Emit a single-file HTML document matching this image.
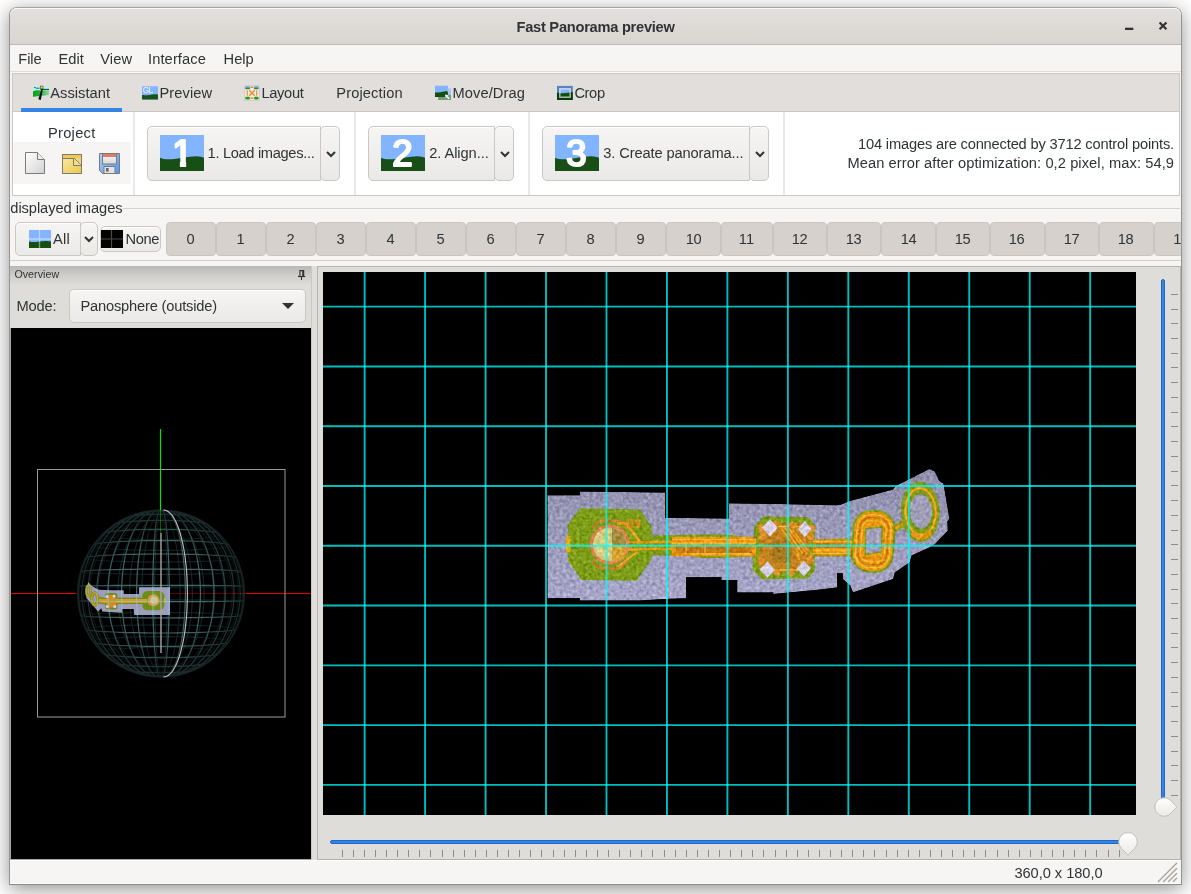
<!DOCTYPE html>
<html><head><meta charset="utf-8"><title>Fast Panorama preview</title><style>
html,body{margin:0;padding:0;}
body{width:1191px;height:894px;overflow:hidden;background:#fff;position:relative;font-family:'Liberation Sans', sans-serif;}
#win{position:absolute;left:9px;top:7px;width:1173px;height:878px;box-sizing:border-box;border:1px solid #949494;border-top-color:#a3a3a3;border-bottom-color:#8c8c8c;border-radius:8px 8px 0 0;background:#f6f5f4;box-shadow:0 4px 20px 0 rgba(0,0,0,.44);}
.t{position:absolute;white-space:pre;line-height:1;}
#tx{position:absolute;left:0;top:0;width:1191px;height:894px;}
#all{position:absolute;left:0;top:0;width:1191px;height:894px;will-change:transform;}
</style></head><body>
<div id="all">
<div id="win"></div>
<div style="position:absolute;left:10px;top:8px;width:1171px;height:36px;background:linear-gradient(#e2dfdc,#d9d5d1);border-radius:7px 7px 0 0;box-shadow:inset 0 1px rgba(255,255,255,.8);"></div>
<div style="position:absolute;left:10px;top:44px;width:1171px;height:1px;background:#bfb8b1;"></div>
<svg style="position:absolute;left:1120px;top:16px" width="56" height="20"><rect x="5" y="11.7" width="8.3" height="2.3" fill="#2e3436"/><path d="M39.600 6.450 L46.400 13.250 M46.400 6.450 L39.600 13.250" stroke="#2e3436" stroke-width="2.200"/></svg>
<div style="position:absolute;left:10px;top:45px;width:1171px;height:27px;background:#f6f5f4;"></div>
<div style="position:absolute;left:10px;top:71px;width:1171px;height:1px;background:#dededc;"></div>
<div style="position:absolute;left:10px;top:72px;width:1171px;height:1px;background:#fbfbfa;"></div>
<div style="position:absolute;left:12px;top:73px;width:1168px;height:123px;background:#fff;border:1px solid #cdc7c2;box-sizing:border-box;"></div>
<div style="position:absolute;left:13px;top:74px;width:1166px;height:37px;background:#e1dedb;"></div>
<div style="position:absolute;left:13px;top:111px;width:1166px;height:1px;background:#cdc7c2;"></div>
<div style="position:absolute;left:21px;top:108px;width:101px;height:4px;background:#3584e4;"></div>
<div style="position:absolute;left:13px;top:142px;width:118px;height:42px;background:#f6f5f4;"></div>
<div style="position:absolute;left:133px;top:112px;width:2px;height:83px;background:#e9e9e8;"></div>
<div style="position:absolute;left:354px;top:112px;width:2px;height:83px;background:#e9e9e8;"></div>
<div style="position:absolute;left:528px;top:112px;width:2px;height:83px;background:#e9e9e8;"></div>
<div style="position:absolute;left:783px;top:112px;width:2px;height:83px;background:#e9e9e8;"></div>
<div style="position:absolute;left:147px;top:126px;width:174px;height:55px;box-sizing:border-box;border:1px solid #cdc7c2;border-radius:5px 0 0 5px;background:linear-gradient(#f6f5f4,#ebe9e7);box-shadow:inset 0 1px #fff;"></div><div style="position:absolute;left:320px;top:126px;width:20px;height:55px;box-sizing:border-box;border:1px solid #cdc7c2;border-radius:5px;background:linear-gradient(#f6f5f4,#ebe9e7);box-shadow:inset 0 1px #fff;"></div><svg style="position:absolute;left:324.5px;top:148px" width="12" height="12"><path d="M2 4 L6 8 L10 4" fill="none" stroke="#2e3436" stroke-width="2"/></svg>
<svg style="position:absolute;left:160px;top:135px" width="44" height="36" viewBox="0 0 44 36"><clipPath id="c1"><path d="M0 0H44V26.900H26.100V36H19.900V26.900H0Z"/></clipPath><rect width="44" height="36" fill="#82b4ff"/><path d="M0 22.800 C3 24.200 7 24.600 12 24.200 C20 23.500 28 21.300 36 21.200 C40 21.200 42 22 44 22.700 L44 36 L0 36Z" fill="#174f17"/><g clip-path="url(#c1)"><text x="22.4" y="31.100" text-anchor="middle" font-family="Liberation Sans, sans-serif" font-size="36.600" fill="#fff" stroke="#fff" stroke-width="2.200" stroke-linejoin="round">1</text></g></svg>
<div style="position:absolute;left:368px;top:126px;width:127px;height:55px;box-sizing:border-box;border:1px solid #cdc7c2;border-radius:5px 0 0 5px;background:linear-gradient(#f6f5f4,#ebe9e7);box-shadow:inset 0 1px #fff;"></div><div style="position:absolute;left:494px;top:126px;width:20px;height:55px;box-sizing:border-box;border:1px solid #cdc7c2;border-radius:5px;background:linear-gradient(#f6f5f4,#ebe9e7);box-shadow:inset 0 1px #fff;"></div><svg style="position:absolute;left:498.5px;top:148px" width="12" height="12"><path d="M2 4 L6 8 L10 4" fill="none" stroke="#2e3436" stroke-width="2"/></svg>
<svg style="position:absolute;left:381px;top:135px" width="44" height="36" viewBox="0 0 44 36"><rect width="44" height="36" fill="#82b4ff"/><path d="M0 22.800 C3 24.200 7 24.600 12 24.200 C20 23.500 28 21.300 36 21.200 C40 21.200 42 22 44 22.700 L44 36 L0 36Z" fill="#174f17"/><g><text x="21.3" y="31.100" text-anchor="middle" font-family="Liberation Sans, sans-serif" font-size="36.600" fill="#fff" stroke="#fff" stroke-width="2.200" stroke-linejoin="round">2</text></g></svg>
<div style="position:absolute;left:542px;top:126px;width:208px;height:55px;box-sizing:border-box;border:1px solid #cdc7c2;border-radius:5px 0 0 5px;background:linear-gradient(#f6f5f4,#ebe9e7);box-shadow:inset 0 1px #fff;"></div><div style="position:absolute;left:749px;top:126px;width:20px;height:55px;box-sizing:border-box;border:1px solid #cdc7c2;border-radius:5px;background:linear-gradient(#f6f5f4,#ebe9e7);box-shadow:inset 0 1px #fff;"></div><svg style="position:absolute;left:753.5px;top:148px" width="12" height="12"><path d="M2 4 L6 8 L10 4" fill="none" stroke="#2e3436" stroke-width="2"/></svg>
<svg style="position:absolute;left:555px;top:135px" width="44" height="36" viewBox="0 0 44 36"><rect width="44" height="36" fill="#82b4ff"/><path d="M0 22.800 C3 24.200 7 24.600 12 24.200 C20 23.500 28 21.300 36 21.200 C40 21.200 42 22 44 22.700 L44 36 L0 36Z" fill="#174f17"/><g><text x="21.3" y="31.100" text-anchor="middle" font-family="Liberation Sans, sans-serif" font-size="36.600" fill="#fff" stroke="#fff" stroke-width="2.200" stroke-linejoin="round">3</text></g></svg>
<div style="position:absolute;left:123px;top:208px;width:1057px;height:1px;background:#d5d0cc;"></div>
<div style="position:absolute;left:10px;top:260px;width:1171px;height:1px;background:#d5d0cc;"></div>
<div style="position:absolute;left:15px;top:222px;width:66px;height:34px;box-sizing:border-box;border:1px solid #cdc7c2;border-radius:5px 0 0 5px;background:linear-gradient(#f6f5f4,#ebe9e7);box-shadow:inset 0 1px #fff;"></div>
<div style="position:absolute;left:80px;top:222px;width:18px;height:34px;box-sizing:border-box;border:1px solid #cdc7c2;border-radius:5px;background:linear-gradient(#f6f5f4,#ebe9e7);box-shadow:inset 0 1px #fff;"></div>
<svg style="position:absolute;left:83px;top:233px" width="12" height="12"><path d="M2 4 L6 8 L10 4" fill="none" stroke="#2e3436" stroke-width="2"/></svg>
<svg style="position:absolute;left:29px;top:230px" width="22" height="18"><rect width="22" height="18" fill="#82b4ff"/><path d="M0 11.5 C5 13 11 11 16 11 C19 11 20.5 11.2 22 11.5 L22 18 L0 18Z" fill="#174f12"/><path d="M10.5 0V18M0 9H22" stroke="rgba(255,255,255,.45)" stroke-width="1.4"/></svg>
<div style="position:absolute;left:100px;top:226px;width:61px;height:26px;box-sizing:border-box;border:1px solid #cdc7c2;border-radius:5px;background:linear-gradient(#f6f5f4,#ebe9e7);box-shadow:inset 0 1px #fff;"></div>
<svg style="position:absolute;left:101px;top:230px" width="22" height="18"><rect width="22" height="18" fill="#000"/><path d="M10.5 0V18M0 9H22" stroke="#4a4a4a" stroke-width="1.2"/></svg>
<div style="position:absolute;left:166px;top:222px;width:1015px;height:34px;overflow:hidden;"><div style="position:absolute;left:0px;top:0px;width:50px;height:34px;box-sizing:border-box;border:1px solid #cbc5c0;border-radius:4px;background:#d6d1cd;"></div><div style="position:absolute;left:50px;top:0px;width:50px;height:34px;box-sizing:border-box;border:1px solid #cbc5c0;border-radius:4px;background:#d6d1cd;"></div><div style="position:absolute;left:100px;top:0px;width:50px;height:34px;box-sizing:border-box;border:1px solid #cbc5c0;border-radius:4px;background:#d6d1cd;"></div><div style="position:absolute;left:150px;top:0px;width:50px;height:34px;box-sizing:border-box;border:1px solid #cbc5c0;border-radius:4px;background:#d6d1cd;"></div><div style="position:absolute;left:200px;top:0px;width:50px;height:34px;box-sizing:border-box;border:1px solid #cbc5c0;border-radius:4px;background:#d6d1cd;"></div><div style="position:absolute;left:250px;top:0px;width:50px;height:34px;box-sizing:border-box;border:1px solid #cbc5c0;border-radius:4px;background:#d6d1cd;"></div><div style="position:absolute;left:300px;top:0px;width:50px;height:34px;box-sizing:border-box;border:1px solid #cbc5c0;border-radius:4px;background:#d6d1cd;"></div><div style="position:absolute;left:350px;top:0px;width:50px;height:34px;box-sizing:border-box;border:1px solid #cbc5c0;border-radius:4px;background:#d6d1cd;"></div><div style="position:absolute;left:400px;top:0px;width:50px;height:34px;box-sizing:border-box;border:1px solid #cbc5c0;border-radius:4px;background:#d6d1cd;"></div><div style="position:absolute;left:450px;top:0px;width:50px;height:34px;box-sizing:border-box;border:1px solid #cbc5c0;border-radius:4px;background:#d6d1cd;"></div><div style="position:absolute;left:500px;top:0px;width:55px;height:34px;box-sizing:border-box;border:1px solid #cbc5c0;border-radius:4px;background:#d6d1cd;"></div><div style="position:absolute;left:555px;top:0px;width:52px;height:34px;box-sizing:border-box;border:1px solid #cbc5c0;border-radius:4px;background:#d6d1cd;"></div><div style="position:absolute;left:607px;top:0px;width:54px;height:34px;box-sizing:border-box;border:1px solid #cbc5c0;border-radius:4px;background:#d6d1cd;"></div><div style="position:absolute;left:661px;top:0px;width:54px;height:34px;box-sizing:border-box;border:1px solid #cbc5c0;border-radius:4px;background:#d6d1cd;"></div><div style="position:absolute;left:715px;top:0px;width:55px;height:34px;box-sizing:border-box;border:1px solid #cbc5c0;border-radius:4px;background:#d6d1cd;"></div><div style="position:absolute;left:770px;top:0px;width:54px;height:34px;box-sizing:border-box;border:1px solid #cbc5c0;border-radius:4px;background:#d6d1cd;"></div><div style="position:absolute;left:824px;top:0px;width:55px;height:34px;box-sizing:border-box;border:1px solid #cbc5c0;border-radius:4px;background:#d6d1cd;"></div><div style="position:absolute;left:879px;top:0px;width:54px;height:34px;box-sizing:border-box;border:1px solid #cbc5c0;border-radius:4px;background:#d6d1cd;"></div><div style="position:absolute;left:933px;top:0px;width:55px;height:34px;box-sizing:border-box;border:1px solid #cbc5c0;border-radius:4px;background:#d6d1cd;"></div><div style="position:absolute;left:988px;top:0px;width:55px;height:34px;box-sizing:border-box;border:1px solid #cbc5c0;border-radius:4px;background:#d6d1cd;"></div></div>
<div style="position:absolute;left:10px;top:266px;width:302px;height:18px;background:linear-gradient(#b9b8b6,#cfcecb 55%,#dddbd8);"></div>
<div style="position:absolute;left:10px;top:284px;width:302px;height:44px;background:#deddda;"></div>
<div style="position:absolute;left:69px;top:289px;width:237px;height:34px;box-sizing:border-box;border:1px solid #cdc7c2;border-radius:5px;background:linear-gradient(#f6f5f4,#ebe9e7);box-shadow:inset 0 1px #fff;"></div>
<svg style="position:absolute;left:281px;top:302px" width="14" height="8"><path d="M1 1 L13 1 L7 7Z" fill="#2e3436"/></svg>
<svg style="position:absolute;left:297px;top:269px" width="10" height="12" viewBox="297 269 10 12"><path d="M299.900 276V270.600H303.200V276" stroke="#2e3436" stroke-width="1.100" fill="none"/><path d="M303.300 270.100V276" stroke="#2e3436" stroke-width="1.900" fill="none"/><path d="M298 276.500H305.200" stroke="#2e3436" stroke-width="1.200"/><path d="M301.500 277V280" stroke="#2e3436" stroke-width="1.100"/></svg>
<div style="position:absolute;left:10px;top:328px;width:302px;height:532px;background:#a8a7a5;"></div>
<div style="position:absolute;left:11px;top:328px;width:300px;height:531px;background:#000;"></div>
<div style="position:absolute;left:311px;top:266px;width:1px;height:594px;background:#c9c8c5;"></div>
<div style="position:absolute;left:312px;top:266px;width:5px;height:594px;background:#e0dedb;"></div>
<div style="position:absolute;left:317px;top:266px;width:864px;height:594px;background:#deddda;border:1px solid #b6b3ae;box-sizing:border-box;"></div>
<div style="position:absolute;left:323px;top:272px;width:813px;height:543px;background:#000;"></div>
<div style="position:absolute;left:10px;top:860px;width:1171px;height:24px;background:#f6f5f4;box-shadow:inset 0 1px #fcfcfb, inset 0 -1px #fdfdfc;"></div>
<svg style="position:absolute;left:323px;top:272px" width="813" height="543" viewBox="323 272 813 543">
<defs><filter id="nz" filterUnits="userSpaceOnUse" x="540" y="460" width="420" height="150" color-interpolation-filters="sRGB"><feTurbulence type="fractalNoise" baseFrequency="0.3" numOctaves="2" seed="7" result="n"/><feColorMatrix in="n" type="matrix" values="0.5 0.5 0 0 0  0.5 0.5 0 0 0  0.5 0.5 0 0 0  0 0 0 0 1" result="g"/><feComposite in="SourceGraphic" in2="g" operator="arithmetic" k1="0" k2="1" k3="0.5" k4="-0.25" result="c"/><feComposite in="c" in2="SourceAlpha" operator="in"/></filter><linearGradient id="gg" gradientUnits="userSpaceOnUse" x1="0" y1="470" x2="0" y2="600"><stop offset="0" stop-color="#8f8eab"/><stop offset="1" stop-color="#a7a6c8"/></linearGradient><clipPath id="cp"><rect x="323" y="272" width="813" height="543"/></clipPath></defs>
<g clip-path="url(#cp)"><g filter="url(#nz)">
<polygon points="547.4,495.2 580.0,495.2 580.0,491.5 665.1,492.5 665.1,517.8 726.3,518.6 728.8,518.6 728.8,503.2 780.0,504.0 836.0,505.2 841.2,504.5 849.5,501.1 893.1,489.4 895.7,486.0 929.3,469.0 934.8,471.5 939.3,481.1 943.5,483.5 949.4,518.8 947.4,521.4 947.9,530.4 935.1,543.9 929.3,547.5 911.6,555.6 909.9,562.3 894.8,572.4 893.1,579.1 852.9,592.5 850.4,585.8 842.8,579.1 842.8,573.2 837.0,573.2 837.0,587.5 816.0,590.0 773.3,594.0 773.3,592.4 737.2,592.4 737.2,579.9 721.3,579.9 721.3,577.3 692.0,577.3 686.0,577.3 686.0,598.3 665.0,599.0 640.0,600.5 580.0,600.5 580.0,598.3 547.4,598.3" fill="url(#gg)"/>
<polygon points="580.4,508.2 640.0,509.5 651.7,527.0 651.7,535.4 676.0,535.0 700.0,534.6 726.0,534.6 754.0,537.8 754.0,526.9 763.1,516.4 808.0,517.0 814.9,525.0 814.9,539.5 852.0,538.0 852.0,556.5 814.9,556.4 814.9,570.6 807.8,578.5 762.6,579.2 752.6,570.6 752.6,556.4 726.0,558.0 700.0,558.0 690.0,555.5 651.7,555.5 651.7,558.9 636.6,580.7 581.3,579.9 567.9,560.6 567.9,523.7" fill="#7d9c18"/>
<rect x="566" y="536.2" width="4.4" height="16" fill="#e0b010"/>
<path d="M630 542.200H680M630 548.800H680" stroke="#e8960f" stroke-width="2.200" fill="none"/>
<rect x="672" y="536.800" width="84" height="19.500" fill="#e8960f"/>
<rect x="813" y="539.500" width="40" height="16" fill="#e8960f"/>
<rect x="676" y="545" width="76" height="8" fill="#c47a14"/>
<rect x="816" y="543" width="34" height="5" fill="#c47a14"/>
<path d="M672 539.500H756M672 543.200H756M690 553.800H752M813 541.500H853M813 550H853M813 553.500H853" stroke="#f7b93a" stroke-width="1.200" fill="none"/>
<path d="M686 541V554M705 541V554" stroke="#f7b93a" stroke-width="1.200" fill="none"/>
<path d="M592 528 L600 520.500 L619 520.500 L628 528 M592 561 L600 568.500 L619 568.500 L628 561" stroke="#d07a32" stroke-width="2.200" fill="none"/>
<circle cx="609.8" cy="544.6" r="20" fill="#dd8450"/>
<circle cx="609.8" cy="544.6" r="16.800" fill="#d3cd82"/>
<path d="M612 528 A16.800 16.800 0 0 1 612 561.200Z" fill="#a08c3c"/>
<path d="M612 545 H626 V556 A16.800 16.800 0 0 1 612 561.200Z" fill="#d6a232"/>
<path d="M617 523.500 L626 523.500 L640 541.500" stroke="#f2a11c" stroke-width="2.400" fill="none"/>
<path d="M628 550 L641 549.500 M617 567 L637 552" stroke="#f2a11c" stroke-width="2" fill="none"/>
<text x="627" y="528.300" font-family="Liberation Sans, sans-serif" font-size="12.500" font-weight="700" fill="#e8861a">09</text>
<polygon points="765.0,523.0 806.0,523.0 811.0,528.0 811.0,567.0 806.0,572.0 765.0,572.0 759.0,567.0 759.0,528.0" fill="#c2821e"/>
<rect x="772" y="540" width="20" height="22" fill="#a9791f"/>
<path d="M778 526.500H800M776 570H798" stroke="#f7b93a" stroke-width="1.600" fill="none"/>
<path d="M781 528L799 554M785 528L803 554M789 528L807 554M793 530L808 551" stroke="#f2a11c" stroke-width="1.500" fill="none"/>
<path d="M797 554L803 566" stroke="#f2a11c" stroke-width="2" fill="none"/>
<circle cx="762.6" cy="535.9" r="3.600" fill="#e0902a"/>
<circle cx="761.6" cy="527.4" r="3.600" fill="#e0902a"/>
<circle cx="810.6" cy="536.4" r="3.600" fill="#e0902a"/>
<circle cx="811.6" cy="528.3" r="3.600" fill="#e0902a"/>
<circle cx="760.7" cy="560.6" r="3.600" fill="#e0902a"/>
<circle cx="810.2" cy="559.7" r="3.600" fill="#e0902a"/>
<circle cx="792.6" cy="525" r="3.600" fill="#e0902a"/>
<circle cx="775" cy="524" r="3.600" fill="#e0902a"/>
<circle cx="790" cy="573" r="3.600" fill="#e0902a"/>
<circle cx="777" cy="572" r="3.600" fill="#e0902a"/>
<polygon points="762.0,527.8 769.9,519.2 777.8,527.8 769.9,536.4" fill="#d5d0e6"/>
<polygon points="798.1,529 804.7,520.7 811.3,529 804.7,537.3" fill="#d5d0e6"/>
<polygon points="759.6,569.7 767.4,561.6 775.2,569.7 767.4,577.8" fill="#d5d0e6"/>
<polygon points="796.8,568.5 803.8,560.6 810.8,568.5 803.8,576.4" fill="#d5d0e6"/>
<path d="M893 530 L908 520.500" stroke="#7d9c18" stroke-width="7"/><path d="M893 530 L908 520.500" stroke="#e8960f" stroke-width="3.200"/>
<g transform="translate(873.2 541.3) rotate(4)"><rect x="-21.500" y="-31.500" width="43" height="63" rx="19" fill="#7d9c18"/><rect x="-19.500" y="-29.500" width="39" height="59" rx="17" fill="#e8960f"/><rect x="-17" y="-26.500" width="34" height="53" rx="14" fill="none" stroke="#f7b93a" stroke-width="1.300"/><rect x="-14.500" y="-23.500" width="29" height="47" rx="11" fill="none" stroke="#c97c14" stroke-width="1.600"/><rect x="-12" y="-20.500" width="24" height="41" rx="8" fill="none" stroke="#f7b93a" stroke-width="1.200"/><polygon points="-8.500,-12 8,-15 9,10 -7,14" fill="#a19eba" stroke="#7d9c18" stroke-width="1.400" stroke-linejoin="round"/></g>
<g transform="translate(920.3 511.7) rotate(-3)"><ellipse rx="19.400" ry="30.200" fill="#7d9c18"/><ellipse cx="0.600" cy="-0.300" rx="11" ry="17.100" fill="#a19eba"/><ellipse cx="0.300" rx="15" ry="23.500" fill="none" stroke="#e8960f" stroke-width="2.800"/><ellipse cx="0.300" rx="15" ry="23.500" fill="none" stroke="#f7b93a" stroke-width="0.900"/><path d="M-9 21 A15 23.500 0 0 0 9 21" stroke="#e8960f" stroke-width="4.500" fill="none"/></g>
</g></g>
<path d="M323 306.65H1136M323 366.43H1136M323 426.21H1136M323 485.99H1136M323 545.77H1136M323 605.55H1136M323 665.33H1136M323 725.11H1136M323 784.89H1136" stroke="#0ff" stroke-opacity="0.740" stroke-width="1.900" fill="none"/>
<path d="M364.65 272V815M425.11 272V815M485.57 272V815M546.03 272V815M606.49 272V815M666.95 272V815M727.41 272V815M787.87 272V815M848.33 272V815M908.79 272V815M969.25 272V815M1029.71 272V815M1090.17 272V815" stroke="#0ff" stroke-opacity="0.740" stroke-width="1.900" fill="none"/>
</svg>
<svg style="position:absolute;left:11px;top:328px" width="300" height="531" viewBox="11 328 300 531">
<path d="M160.5 429V510" stroke="#00e800" stroke-width="1.2"/>
<path d="M160.5 510V533" stroke="#006000" stroke-width="1"/>
<path d="M11 593.5H76.5M246 593.5H311" stroke="#e80000" stroke-width="1.2"/>
<path d="M170 593.5H246" stroke="#5a0000" stroke-width="1"/>
<rect x="37.5" y="469.5" width="247.500" height="247.500" fill="none" stroke="#9a9a9a" stroke-width="1"/>
<g>
<polygon points="170,587.200 139,587.200 139,593.900 123.700,593.900 123.700,590.200 111.900,590.200 98.900,589.700 91.800,586 88.400,582.200 85.500,589.300 86.300,597.700 98,611.600 101.400,608.200 102.200,611.600 122,612.800 122,609 133.700,609 134.200,614.900 170,614.900" fill="#9e9cbc"/>
<rect x="142.100" y="591" width="22.300" height="19.300" rx="5.500" fill="#6f8c14"/>
<rect x="105.200" y="593.100" width="12.200" height="16.400" rx="2.500" fill="#6f8c14"/>
<path d="M96 599.500 L104 601 L146 600.800" stroke="#758c18" stroke-width="6.500" fill="none"/>
<path d="M97 599.800 L104 601 L147 600.800" stroke="#dc9620" stroke-width="3.800" fill="none"/>
<rect x="106.500" y="595" width="9.600" height="12.600" rx="2" fill="#cf8c22"/>
<circle cx="106.9" cy="596.4" r="1.500" fill="#d8d4ea"/>
<circle cx="114" cy="596" r="1.500" fill="#d8d4ea"/>
<circle cx="107.3" cy="606.5" r="1.500" fill="#d8d4ea"/>
<circle cx="114.8" cy="606.5" r="1.500" fill="#d8d4ea"/>
<ellipse cx="94.700" cy="599" rx="3" ry="6.200" fill="none" stroke="#6f8c14" stroke-width="3"/>
<ellipse cx="94.700" cy="599" rx="3" ry="6.200" fill="none" stroke="#d89a28" stroke-width="1.500"/>
<ellipse cx="88.300" cy="591" rx="2" ry="5.300" fill="none" stroke="#6f8c14" stroke-width="2.600"/>
<ellipse cx="88.300" cy="591" rx="2" ry="5.300" fill="none" stroke="#d89a28" stroke-width="1.200"/>
<circle cx="153.500" cy="600.300" r="6" fill="#d89a4c"/>
<circle cx="154" cy="600.200" r="3.600" fill="#dcc88c"/>
<rect x="164" y="598" width="1.500" height="4.500" fill="#e0b010"/>
</g>
<defs><radialGradient id="sg" gradientUnits="userSpaceOnUse" cx="161" cy="593.5" r="84"><stop offset="0" stop-color="#fff"/><stop offset="0.6" stop-color="#fff" stop-opacity="0.85"/><stop offset="1" stop-color="#fff" stop-opacity="0.3"/></radialGradient><mask id="sm" maskUnits="userSpaceOnUse" x="70" y="500" width="182" height="187"><rect x="70" y="500" width="182" height="187" fill="url(#sg)"/></mask></defs>
<g mask="url(#sm)"><path d="M161.0 676.3 L169.6 675.8 L178.1 674.4 L186.4 672.0 L194.4 668.8 L202.0 664.9 L209.2 660.1 L215.8 654.6 L221.8 648.5 L227.2 641.8 L231.8 634.5 L235.7 626.9 L238.7 618.8 L240.9 610.5 L242.2 602.1 L242.6 593.5 L242.2 584.9 L240.9 576.5 L238.7 568.2 L235.7 560.1 L231.8 552.5 L227.2 545.2 L221.8 538.5 L215.8 532.4 L209.2 526.9 L202.0 522.1 L194.4 518.2 L186.4 515.0 L178.1 512.6 L169.6 511.2 L161.0 510.7M161.0 676.3 L169.3 675.6 L177.5 674.0 L185.5 671.5 L193.1 668.2 L200.4 664.1 L207.2 659.3 L213.4 653.8 L219.1 647.6 L224.1 641.0 L228.4 633.8 L232.0 626.2 L234.8 618.3 L236.9 610.2 L238.1 601.9 L238.5 593.5 L238.1 585.1 L236.9 576.8 L234.8 568.7 L232.0 560.8 L228.4 553.2 L224.1 546.0 L219.1 539.4 L213.4 533.2 L207.2 527.7 L200.4 522.9 L193.1 518.8 L185.5 515.5 L177.5 513.0 L169.3 511.4 L161.0 510.7M161.0 676.3 L168.8 675.4 L176.4 673.7 L183.8 671.0 L190.9 667.6 L197.6 663.4 L203.8 658.5 L209.5 653.0 L214.7 646.8 L219.3 640.2 L223.2 633.1 L226.4 625.6 L229.0 617.9 L230.8 609.9 L231.9 601.7 L232.3 593.5 L231.9 585.3 L230.8 577.1 L229.0 569.1 L226.4 561.4 L223.2 553.9 L219.3 546.8 L214.7 540.2 L209.5 534.0 L203.8 528.5 L197.6 523.6 L190.9 519.4 L183.8 516.0 L176.4 513.3 L168.8 511.6 L161.0 510.7M161.0 676.3 L168.0 675.3 L174.9 673.3 L181.5 670.6 L187.8 667.0 L193.8 662.8 L199.3 657.8 L204.3 652.2 L208.9 646.1 L212.9 639.5 L216.3 632.5 L219.2 625.1 L221.4 617.5 L223.0 609.6 L224.0 601.6 L224.3 593.5 L224.0 585.4 L223.0 577.4 L221.4 569.5 L219.2 561.9 L216.3 554.5 L212.9 547.5 L208.9 540.9 L204.3 534.8 L199.3 529.2 L193.8 524.2 L187.8 520.0 L181.5 516.4 L174.9 513.7 L168.0 511.7 L161.0 510.7M161.0 676.3 L167.1 675.1 L173.0 673.1 L178.6 670.2 L184.0 666.6 L189.1 662.2 L193.7 657.2 L198.0 651.6 L201.9 645.5 L205.2 638.9 L208.1 632.0 L210.5 624.7 L212.4 617.1 L213.7 609.4 L214.6 601.5 L214.8 593.5 L214.6 585.5 L213.7 577.6 L212.4 569.9 L210.5 562.3 L208.1 555.0 L205.2 548.1 L201.9 541.5 L198.0 535.4 L193.7 529.8 L189.1 524.8 L184.0 520.4 L178.6 516.8 L173.0 513.9 L167.1 511.9 L161.0 510.7M161.0 676.3 L165.9 675.0 L170.7 672.8 L175.2 669.9 L179.6 666.2 L183.6 661.8 L187.3 656.7 L190.8 651.1 L193.8 645.0 L196.5 638.5 L198.8 631.5 L200.7 624.3 L202.2 616.8 L203.2 609.2 L203.9 601.4 L204.1 593.5 L203.9 585.6 L203.2 577.8 L202.2 570.2 L200.7 562.7 L198.8 555.5 L196.5 548.5 L193.8 542.0 L190.8 535.9 L187.3 530.3 L183.6 525.2 L179.6 520.8 L175.2 517.1 L170.7 514.2 L165.9 512.0 L161.0 510.7M161.0 676.3 L164.6 674.9 L168.1 672.7 L171.5 669.6 L174.6 665.8 L177.6 661.4 L180.3 656.3 L182.8 650.7 L185.0 644.6 L186.9 638.1 L188.6 631.2 L190.0 624.0 L191.1 616.6 L191.8 609.0 L192.3 601.3 L192.4 593.5 L192.3 585.7 L191.8 578.0 L191.1 570.4 L190.0 563.0 L188.6 555.8 L186.9 548.9 L185.0 542.4 L182.8 536.3 L180.3 530.7 L177.6 525.6 L174.6 521.2 L171.5 517.4 L168.1 514.3 L164.6 512.1 L161.0 510.7M161.0 676.3 L163.2 674.9 L165.3 672.6 L167.4 669.5 L169.3 665.6 L171.1 661.2 L172.8 656.1 L174.3 650.5 L175.6 644.4 L176.8 637.9 L177.8 631.0 L178.6 623.8 L179.3 616.5 L179.8 608.9 L180.0 601.2 L180.1 593.5 L180.0 585.8 L179.8 578.1 L179.3 570.5 L178.6 563.2 L177.8 556.0 L176.8 549.1 L175.6 542.6 L174.3 536.5 L172.8 530.9 L171.1 525.8 L169.3 521.4 L167.4 517.5 L165.3 514.4 L163.2 512.1 L161.0 510.7M161.0 676.3 L161.7 674.8 L162.5 672.5 L163.1 669.4 L163.8 665.5 L164.4 661.0 L165.0 656.0 L165.5 650.3 L165.9 644.2 L166.3 637.7 L166.6 630.9 L166.9 623.8 L167.1 616.4 L167.3 608.9 L167.4 601.2 L167.4 593.5 L167.4 585.8 L167.3 578.1 L167.1 570.6 L166.9 563.2 L166.6 556.1 L166.3 549.3 L165.9 542.8 L165.5 536.7 L165.0 531.0 L164.4 526.0 L163.8 521.5 L163.1 517.6 L162.5 514.5 L161.7 512.2 L161.0 510.7M161.0 676.3 L160.3 674.8 L159.5 672.5 L158.9 669.4 L158.2 665.5 L157.6 661.0 L157.0 656.0 L156.5 650.3 L156.1 644.2 L155.7 637.7 L155.4 630.9 L155.1 623.8 L154.9 616.4 L154.7 608.9 L154.6 601.2 L154.6 593.5 L154.6 585.8 L154.7 578.1 L154.9 570.6 L155.1 563.2 L155.4 556.1 L155.7 549.3 L156.1 542.8 L156.5 536.7 L157.0 531.0 L157.6 526.0 L158.2 521.5 L158.9 517.6 L159.5 514.5 L160.3 512.2 L161.0 510.7M161.0 676.3 L158.8 674.9 L156.7 672.6 L154.6 669.5 L152.7 665.6 L150.9 661.2 L149.2 656.1 L147.7 650.5 L146.4 644.4 L145.2 637.9 L144.2 631.0 L143.4 623.8 L142.7 616.5 L142.2 608.9 L142.0 601.2 L141.9 593.5 L142.0 585.8 L142.2 578.1 L142.7 570.5 L143.4 563.2 L144.2 556.0 L145.2 549.1 L146.4 542.6 L147.7 536.5 L149.2 530.9 L150.9 525.8 L152.7 521.4 L154.6 517.5 L156.7 514.4 L158.8 512.1 L161.0 510.7M161.0 676.3 L157.4 674.9 L153.9 672.7 L150.5 669.6 L147.4 665.8 L144.4 661.4 L141.7 656.3 L139.2 650.7 L137.0 644.6 L135.1 638.1 L133.4 631.2 L132.0 624.0 L130.9 616.6 L130.2 609.0 L129.7 601.3 L129.6 593.5 L129.7 585.7 L130.2 578.0 L130.9 570.4 L132.0 563.0 L133.4 555.8 L135.1 548.9 L137.0 542.4 L139.2 536.3 L141.7 530.7 L144.4 525.6 L147.4 521.2 L150.5 517.4 L153.9 514.3 L157.4 512.1 L161.0 510.7M161.0 676.3 L156.1 675.0 L151.3 672.8 L146.8 669.9 L142.4 666.2 L138.4 661.8 L134.7 656.7 L131.2 651.1 L128.2 645.0 L125.5 638.5 L123.2 631.5 L121.3 624.3 L119.8 616.8 L118.8 609.2 L118.1 601.4 L117.9 593.5 L118.1 585.6 L118.8 577.8 L119.8 570.2 L121.3 562.7 L123.2 555.5 L125.5 548.5 L128.2 542.0 L131.2 535.9 L134.7 530.3 L138.4 525.2 L142.4 520.8 L146.8 517.1 L151.3 514.2 L156.1 512.0 L161.0 510.7M161.0 676.3 L154.9 675.1 L149.0 673.1 L143.4 670.2 L138.0 666.6 L132.9 662.2 L128.3 657.2 L124.0 651.6 L120.1 645.5 L116.8 638.9 L113.9 632.0 L111.5 624.7 L109.6 617.1 L108.3 609.4 L107.4 601.5 L107.2 593.5 L107.4 585.5 L108.3 577.6 L109.6 569.9 L111.5 562.3 L113.9 555.0 L116.8 548.1 L120.1 541.5 L124.0 535.4 L128.3 529.8 L132.9 524.8 L138.0 520.4 L143.4 516.8 L149.0 513.9 L154.9 511.9 L161.0 510.7M161.0 676.3 L154.0 675.3 L147.1 673.3 L140.5 670.6 L134.2 667.0 L128.2 662.8 L122.7 657.8 L117.7 652.2 L113.1 646.1 L109.1 639.5 L105.7 632.5 L102.8 625.1 L100.6 617.5 L99.0 609.6 L98.0 601.6 L97.7 593.5 L98.0 585.4 L99.0 577.4 L100.6 569.5 L102.8 561.9 L105.7 554.5 L109.1 547.5 L113.1 540.9 L117.7 534.8 L122.7 529.2 L128.2 524.2 L134.2 520.0 L140.5 516.4 L147.1 513.7 L154.0 511.7 L161.0 510.7M161.0 676.3 L153.2 675.4 L145.6 673.7 L138.2 671.0 L131.1 667.6 L124.4 663.4 L118.2 658.5 L112.5 653.0 L107.3 646.8 L102.7 640.2 L98.8 633.1 L95.6 625.6 L93.0 617.9 L91.2 609.9 L90.1 601.7 L89.7 593.5 L90.1 585.3 L91.2 577.1 L93.0 569.1 L95.6 561.4 L98.8 553.9 L102.7 546.8 L107.3 540.2 L112.5 534.0 L118.2 528.5 L124.4 523.6 L131.1 519.4 L138.2 516.0 L145.6 513.3 L153.2 511.6 L161.0 510.7M161.0 676.3 L152.7 675.6 L144.5 674.0 L136.5 671.5 L128.9 668.2 L121.6 664.1 L114.8 659.3 L108.6 653.8 L102.9 647.6 L97.9 641.0 L93.6 633.8 L90.0 626.2 L87.2 618.3 L85.1 610.2 L83.9 601.9 L83.5 593.5 L83.9 585.1 L85.1 576.8 L87.2 568.7 L90.0 560.8 L93.6 553.2 L97.9 546.0 L102.9 539.4 L108.6 533.2 L114.8 527.7 L121.6 522.9 L128.9 518.8 L136.5 515.5 L144.5 513.0 L152.7 511.4 L161.0 510.7M161.0 676.3 L152.4 675.8 L143.9 674.4 L135.6 672.0 L127.6 668.8 L120.0 664.9 L112.8 660.1 L106.2 654.6 L100.2 648.5 L94.8 641.8 L90.2 634.5 L86.3 626.9 L83.3 618.8 L81.1 610.5 L79.8 602.1 L79.4 593.5 L79.8 584.9 L81.1 576.5 L83.3 568.2 L86.3 560.1 L90.2 552.5 L94.8 545.2 L100.2 538.5 L106.2 532.4 L112.8 526.9 L120.0 522.1 L127.6 518.2 L135.6 515.0 L143.9 512.6 L152.4 511.2 L161.0 510.7M168.2 676.0 L168.2 675.9 L168.0 675.8 L167.8 675.8 L167.6 675.7 L167.2 675.6 L166.8 675.5 L166.3 675.4 L165.8 675.4 L165.2 675.3 L164.6 675.3 L163.9 675.2 L163.2 675.2 L162.5 675.2 L161.7 675.1 L161.0 675.1 L160.3 675.1 L159.5 675.2 L158.8 675.2 L158.1 675.2 L157.4 675.3 L156.8 675.3 L156.2 675.4 L155.7 675.4 L155.2 675.5 L154.8 675.6 L154.4 675.7 L154.2 675.8 L154.0 675.8 L153.8 675.9 L153.8 676.0M182.4 673.5 L182.3 673.3 L181.8 673.0 L181.2 672.7 L180.3 672.5 L179.3 672.2 L178.0 672.0 L176.6 671.8 L175.0 671.6 L173.3 671.5 L171.4 671.3 L169.5 671.2 L167.4 671.1 L165.3 671.1 L163.2 671.0 L161.0 671.0 L158.8 671.0 L156.7 671.1 L154.6 671.1 L152.5 671.2 L150.6 671.3 L148.7 671.5 L147.0 671.6 L145.4 671.8 L144.0 672.0 L142.7 672.2 L141.7 672.5 L140.8 672.7 L140.2 673.0 L139.7 673.3 L139.6 673.5M196.0 668.6 L195.6 668.2 L194.9 667.8 L193.8 667.4 L192.3 667.0 L190.5 666.7 L188.5 666.3 L186.1 666.0 L183.5 665.7 L180.7 665.5 L177.7 665.3 L174.6 665.1 L171.3 665.0 L167.9 664.9 L164.5 664.8 L161.0 664.8 L157.5 664.8 L154.1 664.9 L150.7 665.0 L147.4 665.1 L144.3 665.3 L141.3 665.5 L138.5 665.7 L135.9 666.0 L133.5 666.3 L131.5 666.7 L129.7 667.0 L128.2 667.4 L127.1 667.8 L126.4 668.2 L126.0 668.6M208.5 661.4 L207.9 660.9 L206.8 660.4 L205.2 659.9 L203.2 659.4 L200.7 659.0 L197.9 658.6 L194.7 658.3 L191.2 657.9 L187.4 657.6 L183.4 657.4 L179.1 657.2 L174.7 657.0 L170.2 656.9 L165.6 656.8 L161.0 656.8 L156.4 656.8 L151.8 656.9 L147.3 657.0 L142.9 657.2 L138.6 657.4 L134.6 657.6 L130.8 657.9 L127.3 658.3 L124.1 658.6 L121.3 659.0 L118.8 659.4 L116.8 659.9 L115.2 660.4 L114.1 660.9 L113.5 661.4M219.6 652.1 L218.7 651.5 L217.3 651.0 L215.2 650.5 L212.7 650.0 L209.6 649.6 L206.1 649.2 L202.1 648.8 L197.8 648.5 L193.1 648.2 L188.2 647.9 L183.0 647.7 L177.7 647.5 L172.2 647.4 L166.6 647.3 L161.0 647.3 L155.4 647.3 L149.8 647.4 L144.3 647.5 L139.0 647.7 L133.8 647.9 L128.9 648.2 L124.2 648.5 L119.9 648.8 L115.9 649.2 L112.4 649.6 L109.3 650.0 L106.8 650.5 L104.7 651.0 L103.3 651.5 L102.4 652.1M228.9 641.0 L227.8 640.5 L226.0 640.0 L223.6 639.6 L220.5 639.1 L216.9 638.7 L212.8 638.3 L208.2 638.0 L203.2 637.7 L197.8 637.4 L192.2 637.1 L186.2 637.0 L180.1 636.8 L173.8 636.7 L167.4 636.6 L161.0 636.6 L154.6 636.6 L148.2 636.7 L141.9 636.8 L135.8 637.0 L129.8 637.1 L124.2 637.4 L118.8 637.7 L113.8 638.0 L109.2 638.3 L105.1 638.7 L101.5 639.1 L98.4 639.6 L96.0 640.0 L94.2 640.5 L93.1 641.0M236.1 628.5 L234.8 628.1 L232.8 627.7 L230.0 627.3 L226.6 627.0 L222.5 626.6 L218.0 626.3 L212.9 626.0 L207.3 625.8 L201.4 625.6 L195.2 625.4 L188.7 625.2 L181.9 625.1 L175.1 625.0 L168.1 625.0 L161.0 624.9 L153.9 625.0 L146.9 625.0 L140.1 625.1 L133.3 625.2 L126.8 625.4 L120.6 625.6 L114.7 625.8 L109.1 626.0 L104.0 626.3 L99.5 626.6 L95.4 627.0 L92.0 627.3 L89.2 627.7 L87.2 628.1 L85.9 628.5M241.0 614.9 L239.6 614.7 L237.4 614.4 L234.4 614.2 L230.7 613.9 L226.4 613.7 L221.4 613.5 L216.0 613.3 L210.1 613.2 L203.9 613.0 L197.2 612.9 L190.3 612.8 L183.2 612.7 L175.9 612.7 L168.5 612.6 L161.0 612.6 L153.5 612.6 L146.1 612.7 L138.8 612.7 L131.7 612.8 L124.8 612.9 L118.1 613.0 L111.9 613.2 L106.0 613.3 L100.6 613.5 L95.6 613.7 L91.3 613.9 L87.6 614.2 L84.6 614.4 L82.4 614.7 L81.0 614.9M243.5 600.7 L242.0 600.6 L239.7 600.5 L236.6 600.5 L232.8 600.4 L228.3 600.3 L223.2 600.2 L217.6 600.2 L211.5 600.1 L205.1 600.1 L198.2 600.0 L191.1 600.0 L183.8 600.0 L176.3 599.9 L168.7 599.9 L161.0 599.9 L153.3 599.9 L145.7 599.9 L138.2 600.0 L130.9 600.0 L123.8 600.0 L116.9 600.1 L110.5 600.1 L104.4 600.2 L98.8 600.2 L93.7 600.3 L89.2 600.4 L85.4 600.5 L82.3 600.5 L80.0 600.6 L78.5 600.7M243.5 586.3 L242.0 586.4 L239.7 586.5 L236.6 586.5 L232.8 586.6 L228.3 586.7 L223.2 586.8 L217.6 586.8 L211.5 586.9 L205.1 586.9 L198.2 587.0 L191.1 587.0 L183.8 587.0 L176.3 587.1 L168.7 587.1 L161.0 587.1 L153.3 587.1 L145.7 587.1 L138.2 587.0 L130.9 587.0 L123.8 587.0 L116.9 586.9 L110.5 586.9 L104.4 586.8 L98.8 586.8 L93.7 586.7 L89.2 586.6 L85.4 586.5 L82.3 586.5 L80.0 586.4 L78.5 586.3M241.0 572.1 L239.6 572.3 L237.4 572.6 L234.4 572.8 L230.7 573.1 L226.4 573.3 L221.4 573.5 L216.0 573.7 L210.1 573.8 L203.9 574.0 L197.2 574.1 L190.3 574.2 L183.2 574.3 L175.9 574.3 L168.5 574.4 L161.0 574.4 L153.5 574.4 L146.1 574.3 L138.8 574.3 L131.7 574.2 L124.8 574.1 L118.1 574.0 L111.9 573.8 L106.0 573.7 L100.6 573.5 L95.6 573.3 L91.3 573.1 L87.6 572.8 L84.6 572.6 L82.4 572.3 L81.0 572.1M236.1 558.5 L234.8 558.9 L232.8 559.3 L230.0 559.7 L226.6 560.0 L222.5 560.4 L218.0 560.7 L212.9 561.0 L207.3 561.2 L201.4 561.4 L195.2 561.6 L188.7 561.8 L181.9 561.9 L175.1 562.0 L168.1 562.0 L161.0 562.1 L153.9 562.0 L146.9 562.0 L140.1 561.9 L133.3 561.8 L126.8 561.6 L120.6 561.4 L114.7 561.2 L109.1 561.0 L104.0 560.7 L99.5 560.4 L95.4 560.0 L92.0 559.7 L89.2 559.3 L87.2 558.9 L85.9 558.5M228.9 546.0 L227.8 546.5 L226.0 547.0 L223.6 547.4 L220.5 547.9 L216.9 548.3 L212.8 548.7 L208.2 549.0 L203.2 549.3 L197.8 549.6 L192.2 549.9 L186.2 550.0 L180.1 550.2 L173.8 550.3 L167.4 550.4 L161.0 550.4 L154.6 550.4 L148.2 550.3 L141.9 550.2 L135.8 550.0 L129.8 549.9 L124.2 549.6 L118.8 549.3 L113.8 549.0 L109.2 548.7 L105.1 548.3 L101.5 547.9 L98.4 547.4 L96.0 547.0 L94.2 546.5 L93.1 546.0M219.6 534.9 L218.7 535.5 L217.3 536.0 L215.2 536.5 L212.7 537.0 L209.6 537.4 L206.1 537.8 L202.1 538.2 L197.8 538.5 L193.1 538.8 L188.2 539.1 L183.0 539.3 L177.7 539.5 L172.2 539.6 L166.6 539.7 L161.0 539.7 L155.4 539.7 L149.8 539.6 L144.3 539.5 L139.0 539.3 L133.8 539.1 L128.9 538.8 L124.2 538.5 L119.9 538.2 L115.9 537.8 L112.4 537.4 L109.3 537.0 L106.8 536.5 L104.7 536.0 L103.3 535.5 L102.4 534.9M208.5 525.6 L207.9 526.1 L206.8 526.6 L205.2 527.1 L203.2 527.6 L200.7 528.0 L197.9 528.4 L194.7 528.7 L191.2 529.1 L187.4 529.4 L183.4 529.6 L179.1 529.8 L174.7 530.0 L170.2 530.1 L165.6 530.2 L161.0 530.2 L156.4 530.2 L151.8 530.1 L147.3 530.0 L142.9 529.8 L138.6 529.6 L134.6 529.4 L130.8 529.1 L127.3 528.7 L124.1 528.4 L121.3 528.0 L118.8 527.6 L116.8 527.1 L115.2 526.6 L114.1 526.1 L113.5 525.6M196.0 518.4 L195.6 518.8 L194.9 519.2 L193.8 519.6 L192.3 520.0 L190.5 520.3 L188.5 520.7 L186.1 521.0 L183.5 521.3 L180.7 521.5 L177.7 521.7 L174.6 521.9 L171.3 522.0 L167.9 522.1 L164.5 522.2 L161.0 522.2 L157.5 522.2 L154.1 522.1 L150.7 522.0 L147.4 521.9 L144.3 521.7 L141.3 521.5 L138.5 521.3 L135.9 521.0 L133.5 520.7 L131.5 520.3 L129.7 520.0 L128.2 519.6 L127.1 519.2 L126.4 518.8 L126.0 518.4M182.4 513.5 L182.3 513.7 L181.8 514.0 L181.2 514.3 L180.3 514.5 L179.3 514.8 L178.0 515.0 L176.6 515.2 L175.0 515.4 L173.3 515.5 L171.4 515.7 L169.5 515.8 L167.4 515.9 L165.3 515.9 L163.2 516.0 L161.0 516.0 L158.8 516.0 L156.7 515.9 L154.6 515.9 L152.5 515.8 L150.6 515.7 L148.7 515.5 L147.0 515.4 L145.4 515.2 L144.0 515.0 L142.7 514.8 L141.7 514.5 L140.8 514.3 L140.2 514.0 L139.7 513.7 L139.6 513.5M168.2 511.0 L168.2 511.1 L168.0 511.2 L167.8 511.2 L167.6 511.3 L167.2 511.4 L166.8 511.5 L166.3 511.6 L165.8 511.6 L165.2 511.7 L164.6 511.7 L163.9 511.8 L163.2 511.8 L162.5 511.8 L161.7 511.9 L161.0 511.9 L160.3 511.9 L159.5 511.8 L158.8 511.8 L158.1 511.8 L157.4 511.7 L156.8 511.7 L156.2 511.6 L155.7 511.6 L155.2 511.5 L154.8 511.4 L154.4 511.3 L154.2 511.2 L154.0 511.2 L153.8 511.1 L153.8 511.0" stroke="#7ad0d0" stroke-opacity="0.2" stroke-width="1.100" fill="none"/>
<path d="M161.0 676.3 L161.8 677.0 L162.5 676.7 L163.3 675.4 L164.1 673.2 L164.8 670.0 L165.6 665.8 L166.3 660.7 L166.9 654.6 L167.5 647.7 L168.0 639.9 L168.4 631.5 L168.8 622.5 L169.0 613.1 L169.2 603.4 L169.2 593.5 L169.2 583.6 L169.0 573.9 L168.8 564.5 L168.4 555.5 L168.0 547.1 L167.5 539.3 L166.9 532.4 L166.3 526.3 L165.6 521.2 L164.8 517.0 L164.1 513.8 L163.3 511.6 L162.5 510.3 L161.8 510.0 L161.0 510.7M161.0 676.3 L163.3 676.9 L165.6 676.6 L167.9 675.3 L170.2 673.1 L172.4 669.9 L174.6 665.6 L176.6 660.5 L178.5 654.4 L180.2 647.5 L181.7 639.8 L183.0 631.4 L184.0 622.4 L184.8 613.0 L185.2 603.3 L185.4 593.5 L185.2 583.7 L184.8 574.0 L184.0 564.6 L183.0 555.6 L181.7 547.2 L180.2 539.5 L178.5 532.6 L176.6 526.5 L174.6 521.4 L172.4 517.1 L170.2 513.9 L167.9 511.7 L165.6 510.4 L163.3 510.1 L161.0 510.7M161.0 676.3 L164.7 676.9 L168.5 676.5 L172.2 675.1 L175.9 672.8 L179.6 669.6 L183.0 665.3 L186.3 660.1 L189.4 654.0 L192.2 647.1 L194.6 639.4 L196.7 631.1 L198.3 622.2 L199.5 612.9 L200.2 603.3 L200.5 593.5 L200.2 583.7 L199.5 574.1 L198.3 564.8 L196.7 555.9 L194.6 547.6 L192.2 539.9 L189.4 533.0 L186.3 526.9 L183.0 521.7 L179.6 517.4 L175.9 514.2 L172.2 511.9 L168.5 510.5 L164.7 510.1 L161.0 510.7M161.0 676.3 L166.0 676.8 L171.1 676.3 L176.2 674.9 L181.2 672.5 L186.0 669.1 L190.7 664.8 L195.1 659.6 L199.2 653.5 L202.9 646.6 L206.2 639.0 L208.9 630.7 L211.1 621.9 L212.7 612.6 L213.6 603.1 L213.9 593.5 L213.6 583.9 L212.7 574.4 L211.1 565.1 L208.9 556.3 L206.2 548.0 L202.9 540.4 L199.2 533.5 L195.1 527.4 L190.7 522.2 L186.0 517.9 L181.2 514.5 L176.2 512.1 L171.1 510.7 L166.0 510.2 L161.0 510.7M161.0 676.3 L167.2 676.7 L173.4 676.1 L179.6 674.5 L185.7 672.0 L191.6 668.6 L197.3 664.2 L202.7 658.9 L207.6 652.8 L212.0 645.9 L215.9 638.4 L219.2 630.2 L221.8 621.5 L223.7 612.4 L224.9 603.0 L225.3 593.5 L224.9 584.0 L223.7 574.6 L221.8 565.5 L219.2 556.8 L215.9 548.6 L212.0 541.1 L207.6 534.2 L202.7 528.1 L197.3 522.8 L191.6 518.4 L185.7 515.0 L179.6 512.5 L173.4 510.9 L167.2 510.3 L161.0 510.7M161.0 676.3 L168.1 676.5 L175.3 675.8 L182.4 674.1 L189.4 671.5 L196.2 667.9 L202.6 663.5 L208.7 658.2 L214.3 652.1 L219.3 645.2 L223.7 637.7 L227.3 629.6 L230.3 621.0 L232.4 612.0 L233.7 602.8 L234.1 593.5 L233.7 584.2 L232.4 575.0 L230.3 566.0 L227.3 557.4 L223.7 549.3 L219.3 541.8 L214.3 534.9 L208.7 528.8 L202.6 523.5 L196.2 519.1 L189.4 515.5 L182.4 512.9 L175.3 511.2 L168.1 510.5 L161.0 510.7M161.0 676.3 L168.9 676.3 L176.8 675.4 L184.6 673.6 L192.2 670.8 L199.6 667.2 L206.5 662.7 L213.1 657.3 L219.1 651.2 L224.5 644.4 L229.1 636.9 L233.1 628.9 L236.2 620.5 L238.4 611.7 L239.8 602.6 L240.3 593.5 L239.8 584.4 L238.4 575.3 L236.2 566.5 L233.1 558.1 L229.1 550.1 L224.5 542.6 L219.1 535.8 L213.1 529.7 L206.5 524.3 L199.6 519.8 L192.2 516.2 L184.6 513.4 L176.8 511.6 L168.9 510.7 L161.0 510.7M161.0 676.3 L169.4 676.2 L177.8 675.1 L186.0 673.1 L194.0 670.2 L201.7 666.4 L208.9 661.8 L215.7 656.4 L221.9 650.3 L227.5 643.5 L232.3 636.1 L236.3 628.2 L239.5 619.9 L241.8 611.3 L243.2 602.4 L243.7 593.5 L243.2 584.6 L241.8 575.7 L239.5 567.1 L236.3 558.8 L232.3 550.9 L227.5 543.5 L221.9 536.7 L215.7 530.6 L208.9 525.2 L201.7 520.6 L194.0 516.8 L186.0 513.9 L177.8 511.9 L169.4 510.8 L161.0 510.7M161.0 676.3 L169.6 676.0 L178.2 674.7 L186.6 672.6 L194.7 669.5 L202.5 665.6 L209.8 661.0 L216.6 655.5 L222.8 649.4 L228.4 642.6 L233.2 635.3 L237.2 627.5 L240.3 619.4 L242.6 610.9 L244.0 602.3 L244.4 593.5 L244.0 584.7 L242.6 576.1 L240.3 567.6 L237.2 559.5 L233.2 551.7 L228.4 544.4 L222.8 537.6 L216.6 531.5 L209.8 526.0 L202.5 521.4 L194.7 517.5 L186.6 514.4 L178.2 512.3 L169.6 511.0 L161.0 510.7M161.0 676.3 L152.4 676.0 L143.8 674.7 L135.4 672.6 L127.3 669.5 L119.5 665.6 L112.2 661.0 L105.4 655.5 L99.2 649.4 L93.6 642.6 L88.8 635.3 L84.8 627.5 L81.7 619.4 L79.4 610.9 L78.0 602.3 L77.6 593.5 L78.0 584.7 L79.4 576.1 L81.7 567.6 L84.8 559.5 L88.8 551.7 L93.6 544.4 L99.2 537.6 L105.4 531.5 L112.2 526.0 L119.5 521.4 L127.3 517.5 L135.4 514.4 L143.8 512.3 L152.4 511.0 L161.0 510.7M161.0 676.3 L152.6 676.2 L144.2 675.1 L136.0 673.1 L128.0 670.2 L120.3 666.4 L113.1 661.8 L106.3 656.4 L100.1 650.3 L94.5 643.5 L89.7 636.1 L85.7 628.2 L82.5 619.9 L80.2 611.3 L78.8 602.4 L78.3 593.5 L78.8 584.6 L80.2 575.7 L82.5 567.1 L85.7 558.8 L89.7 550.9 L94.5 543.5 L100.1 536.7 L106.3 530.6 L113.1 525.2 L120.3 520.6 L128.0 516.8 L136.0 513.9 L144.2 511.9 L152.6 510.8 L161.0 510.7M161.0 676.3 L153.1 676.3 L145.2 675.4 L137.4 673.6 L129.8 670.8 L122.4 667.2 L115.5 662.7 L108.9 657.3 L102.9 651.2 L97.5 644.4 L92.9 636.9 L88.9 628.9 L85.8 620.5 L83.6 611.7 L82.2 602.6 L81.7 593.5 L82.2 584.4 L83.6 575.3 L85.8 566.5 L88.9 558.1 L92.9 550.1 L97.5 542.6 L102.9 535.8 L108.9 529.7 L115.5 524.3 L122.4 519.8 L129.8 516.2 L137.4 513.4 L145.2 511.6 L153.1 510.7 L161.0 510.7M161.0 676.3 L153.9 676.5 L146.7 675.8 L139.6 674.1 L132.6 671.5 L125.8 667.9 L119.4 663.5 L113.3 658.2 L107.7 652.1 L102.7 645.2 L98.3 637.7 L94.7 629.6 L91.7 621.0 L89.6 612.0 L88.3 602.8 L87.9 593.5 L88.3 584.2 L89.6 575.0 L91.7 566.0 L94.7 557.4 L98.3 549.3 L102.7 541.8 L107.7 534.9 L113.3 528.8 L119.4 523.5 L125.8 519.1 L132.6 515.5 L139.6 512.9 L146.7 511.2 L153.9 510.5 L161.0 510.7M161.0 676.3 L154.8 676.7 L148.6 676.1 L142.4 674.5 L136.3 672.0 L130.4 668.6 L124.7 664.2 L119.3 658.9 L114.4 652.8 L110.0 645.9 L106.1 638.4 L102.8 630.2 L100.2 621.5 L98.3 612.4 L97.1 603.0 L96.7 593.5 L97.1 584.0 L98.3 574.6 L100.2 565.5 L102.8 556.8 L106.1 548.6 L110.0 541.1 L114.4 534.2 L119.3 528.1 L124.7 522.8 L130.4 518.4 L136.3 515.0 L142.4 512.5 L148.6 510.9 L154.8 510.3 L161.0 510.7M161.0 676.3 L156.0 676.8 L150.9 676.3 L145.8 674.9 L140.8 672.5 L136.0 669.1 L131.3 664.8 L126.9 659.6 L122.8 653.5 L119.1 646.6 L115.8 639.0 L113.1 630.7 L110.9 621.9 L109.3 612.6 L108.4 603.1 L108.1 593.5 L108.4 583.9 L109.3 574.4 L110.9 565.1 L113.1 556.3 L115.8 548.0 L119.1 540.4 L122.8 533.5 L126.9 527.4 L131.3 522.2 L136.0 517.9 L140.8 514.5 L145.8 512.1 L150.9 510.7 L156.0 510.2 L161.0 510.7M161.0 676.3 L157.3 676.9 L153.5 676.5 L149.8 675.1 L146.1 672.8 L142.4 669.6 L139.0 665.3 L135.7 660.1 L132.6 654.0 L129.8 647.1 L127.4 639.4 L125.3 631.1 L123.7 622.2 L122.5 612.9 L121.8 603.3 L121.5 593.5 L121.8 583.7 L122.5 574.1 L123.7 564.8 L125.3 555.9 L127.4 547.6 L129.8 539.9 L132.6 533.0 L135.7 526.9 L139.0 521.7 L142.4 517.4 L146.1 514.2 L149.8 511.9 L153.5 510.5 L157.3 510.1 L161.0 510.7M161.0 676.3 L158.7 676.9 L156.4 676.6 L154.1 675.3 L151.8 673.1 L149.6 669.9 L147.4 665.6 L145.4 660.5 L143.5 654.4 L141.8 647.5 L140.3 639.8 L139.0 631.4 L138.0 622.4 L137.2 613.0 L136.8 603.3 L136.6 593.5 L136.8 583.7 L137.2 574.0 L138.0 564.6 L139.0 555.6 L140.3 547.2 L141.8 539.5 L143.5 532.6 L145.4 526.5 L147.4 521.4 L149.6 517.1 L151.8 513.9 L154.1 511.7 L156.4 510.4 L158.7 510.1 L161.0 510.7M161.0 676.3 L160.2 677.0 L159.5 676.7 L158.7 675.4 L157.9 673.2 L157.2 670.0 L156.4 665.8 L155.7 660.7 L155.1 654.6 L154.5 647.7 L154.0 639.9 L153.6 631.5 L153.2 622.5 L153.0 613.1 L152.8 603.4 L152.8 593.5 L152.8 583.6 L153.0 573.9 L153.2 564.5 L153.6 555.5 L154.0 547.1 L154.5 539.3 L155.1 532.4 L155.7 526.3 L156.4 521.2 L157.2 517.0 L157.9 513.8 L158.7 511.6 L159.5 510.3 L160.2 510.0 L161.0 510.7M153.8 676.0 L153.8 676.1 L153.9 676.2 L154.1 676.3 L154.4 676.4 L154.7 676.5 L155.1 676.6 L155.6 676.6 L156.1 676.7 L156.7 676.8 L157.4 676.8 L158.0 676.9 L158.7 676.9 L159.5 676.9 L160.2 676.9 L161.0 676.9 L161.8 676.9 L162.5 676.9 L163.3 676.9 L164.0 676.9 L164.6 676.8 L165.3 676.8 L165.9 676.7 L166.4 676.6 L166.9 676.6 L167.3 676.5 L167.6 676.4 L167.9 676.3 L168.1 676.2 L168.2 676.1 L168.2 676.0M139.6 673.5 L139.6 673.8 L139.9 674.1 L140.4 674.3 L141.2 674.6 L142.1 674.8 L143.3 675.1 L144.7 675.3 L146.3 675.5 L148.1 675.7 L150.0 675.8 L152.0 676.0 L154.2 676.1 L156.4 676.1 L158.7 676.2 L161.0 676.2 L163.3 676.2 L165.6 676.1 L167.8 676.1 L170.0 676.0 L172.0 675.8 L173.9 675.7 L175.7 675.5 L177.3 675.3 L178.7 675.1 L179.9 674.8 L180.8 674.6 L181.6 674.3 L182.1 674.1 L182.4 673.8 L182.4 673.5M126.0 668.6 L126.0 669.0 L126.4 669.4 L127.1 669.8 L128.3 670.2 L129.9 670.6 L131.8 671.0 L134.0 671.3 L136.6 671.7 L139.5 671.9 L142.7 672.2 L146.0 672.4 L149.6 672.6 L153.3 672.7 L157.1 672.7 L161.0 672.8 L164.9 672.7 L168.7 672.7 L172.4 672.6 L176.0 672.4 L179.3 672.2 L182.5 671.9 L185.4 671.7 L188.0 671.3 L190.2 671.0 L192.1 670.6 L193.7 670.2 L194.9 669.8 L195.6 669.4 L196.0 669.0 L196.0 668.6M113.5 661.4 L113.4 661.9 L113.8 662.4 L114.8 662.9 L116.3 663.4 L118.3 663.9 L120.9 664.3 L123.9 664.8 L127.4 665.2 L131.3 665.5 L135.7 665.9 L140.3 666.1 L145.2 666.3 L150.4 666.5 L155.7 666.6 L161.0 666.6 L166.3 666.6 L171.6 666.5 L176.8 666.3 L181.7 666.1 L186.3 665.9 L190.7 665.5 L194.6 665.2 L198.1 664.8 L201.1 664.3 L203.7 663.9 L205.7 663.4 L207.2 662.9 L208.2 662.4 L208.6 661.9 L208.5 661.4M102.4 652.1 L102.2 652.6 L102.6 653.2 L103.7 653.7 L105.5 654.3 L107.9 654.8 L111.0 655.3 L114.7 655.8 L119.0 656.2 L123.9 656.6 L129.3 656.9 L135.1 657.2 L141.2 657.5 L147.7 657.6 L154.3 657.7 L161.0 657.8 L167.7 657.7 L174.3 657.6 L180.8 657.5 L186.9 657.2 L192.7 656.9 L198.1 656.6 L203.0 656.2 L207.3 655.8 L211.0 655.3 L214.1 654.8 L216.5 654.3 L218.3 653.7 L219.4 653.2 L219.8 652.6 L219.6 652.1M93.1 641.0 L92.8 641.5 L93.2 642.1 L94.3 642.6 L96.3 643.1 L99.1 643.6 L102.6 644.1 L106.9 644.5 L111.9 644.9 L117.5 645.3 L123.8 645.6 L130.5 645.9 L137.8 646.1 L145.3 646.3 L153.1 646.4 L161.0 646.4 L168.9 646.4 L176.7 646.3 L184.2 646.1 L191.5 645.9 L198.2 645.6 L204.5 645.3 L210.1 644.9 L215.1 644.5 L219.4 644.1 L222.9 643.6 L225.7 643.1 L227.7 642.6 L228.8 642.1 L229.2 641.5 L228.9 641.0M85.9 628.5 L85.4 628.9 L85.8 629.4 L87.0 629.8 L89.1 630.2 L92.1 630.6 L95.9 631.0 L100.6 631.4 L106.1 631.7 L112.4 632.0 L119.4 632.3 L126.9 632.6 L135.0 632.7 L143.4 632.9 L152.2 633.0 L161.0 633.0 L169.8 633.0 L178.6 632.9 L187.0 632.7 L195.1 632.6 L202.6 632.3 L209.6 632.0 L215.9 631.7 L221.4 631.4 L226.1 631.0 L229.9 630.6 L232.9 630.2 L235.0 629.8 L236.2 629.4 L236.6 628.9 L236.1 628.5M81.0 614.9 L80.4 615.2 L80.7 615.5 L81.9 615.8 L84.1 616.0 L87.2 616.3 L91.3 616.6 L96.3 616.8 L102.2 617.1 L108.9 617.3 L116.3 617.4 L124.4 617.6 L133.1 617.7 L142.1 617.8 L151.5 617.9 L161.0 617.9 L170.5 617.9 L179.9 617.8 L188.9 617.7 L197.6 617.6 L205.7 617.4 L213.1 617.3 L219.8 617.1 L225.7 616.8 L230.7 616.6 L234.8 616.3 L237.9 616.0 L240.1 615.8 L241.3 615.5 L241.6 615.2 L241.0 614.9M78.5 600.7 L77.8 600.8 L78.1 600.9 L79.4 601.0 L81.6 601.1 L84.8 601.2 L89.0 601.3 L94.1 601.4 L100.1 601.5 L107.1 601.5 L114.7 601.6 L123.1 601.6 L132.1 601.7 L141.5 601.7 L151.2 601.7 L161.0 601.7 L170.8 601.7 L180.5 601.7 L189.9 601.7 L198.9 601.6 L207.3 601.6 L214.9 601.5 L221.9 601.5 L227.9 601.4 L233.0 601.3 L237.2 601.2 L240.4 601.1 L242.6 601.0 L243.9 600.9 L244.2 600.8 L243.5 600.7M78.5 586.3 L77.8 586.2 L78.1 586.1 L79.4 586.0 L81.6 585.9 L84.8 585.8 L89.0 585.7 L94.1 585.6 L100.1 585.5 L107.1 585.5 L114.7 585.4 L123.1 585.4 L132.1 585.3 L141.5 585.3 L151.2 585.3 L161.0 585.3 L170.8 585.3 L180.5 585.3 L189.9 585.3 L198.9 585.4 L207.3 585.4 L214.9 585.5 L221.9 585.5 L227.9 585.6 L233.0 585.7 L237.2 585.8 L240.4 585.9 L242.6 586.0 L243.9 586.1 L244.2 586.2 L243.5 586.3M81.0 572.1 L80.4 571.8 L80.7 571.5 L81.9 571.2 L84.1 571.0 L87.2 570.7 L91.3 570.4 L96.3 570.2 L102.2 569.9 L108.9 569.7 L116.3 569.6 L124.4 569.4 L133.1 569.3 L142.1 569.2 L151.5 569.1 L161.0 569.1 L170.5 569.1 L179.9 569.2 L188.9 569.3 L197.6 569.4 L205.7 569.6 L213.1 569.7 L219.8 569.9 L225.7 570.2 L230.7 570.4 L234.8 570.7 L237.9 571.0 L240.1 571.2 L241.3 571.5 L241.6 571.8 L241.0 572.1M85.9 558.5 L85.4 558.1 L85.8 557.6 L87.0 557.2 L89.1 556.8 L92.1 556.4 L95.9 556.0 L100.6 555.6 L106.1 555.3 L112.4 555.0 L119.4 554.7 L126.9 554.4 L135.0 554.3 L143.4 554.1 L152.2 554.0 L161.0 554.0 L169.8 554.0 L178.6 554.1 L187.0 554.3 L195.1 554.4 L202.6 554.7 L209.6 555.0 L215.9 555.3 L221.4 555.6 L226.1 556.0 L229.9 556.4 L232.9 556.8 L235.0 557.2 L236.2 557.6 L236.6 558.1 L236.1 558.5M93.1 546.0 L92.8 545.5 L93.2 544.9 L94.3 544.4 L96.3 543.9 L99.1 543.4 L102.6 542.9 L106.9 542.5 L111.9 542.1 L117.5 541.7 L123.8 541.4 L130.5 541.1 L137.8 540.9 L145.3 540.7 L153.1 540.6 L161.0 540.6 L168.9 540.6 L176.7 540.7 L184.2 540.9 L191.5 541.1 L198.2 541.4 L204.5 541.7 L210.1 542.1 L215.1 542.5 L219.4 542.9 L222.9 543.4 L225.7 543.9 L227.7 544.4 L228.8 544.9 L229.2 545.5 L228.9 546.0M102.4 534.9 L102.2 534.4 L102.6 533.8 L103.7 533.3 L105.5 532.7 L107.9 532.2 L111.0 531.7 L114.7 531.2 L119.0 530.8 L123.9 530.4 L129.3 530.1 L135.1 529.8 L141.2 529.5 L147.7 529.4 L154.3 529.3 L161.0 529.2 L167.7 529.3 L174.3 529.4 L180.8 529.5 L186.9 529.8 L192.7 530.1 L198.1 530.4 L203.0 530.8 L207.3 531.2 L211.0 531.7 L214.1 532.2 L216.5 532.7 L218.3 533.3 L219.4 533.8 L219.8 534.4 L219.6 534.9M113.5 525.6 L113.4 525.1 L113.8 524.6 L114.8 524.1 L116.3 523.6 L118.3 523.1 L120.9 522.7 L123.9 522.2 L127.4 521.8 L131.3 521.5 L135.7 521.1 L140.3 520.9 L145.2 520.7 L150.4 520.5 L155.7 520.4 L161.0 520.4 L166.3 520.4 L171.6 520.5 L176.8 520.7 L181.7 520.9 L186.3 521.1 L190.7 521.5 L194.6 521.8 L198.1 522.2 L201.1 522.7 L203.7 523.1 L205.7 523.6 L207.2 524.1 L208.2 524.6 L208.6 525.1 L208.5 525.6M126.0 518.4 L126.0 518.0 L126.4 517.6 L127.1 517.2 L128.3 516.8 L129.9 516.4 L131.8 516.0 L134.0 515.7 L136.6 515.3 L139.5 515.1 L142.7 514.8 L146.0 514.6 L149.6 514.4 L153.3 514.3 L157.1 514.3 L161.0 514.2 L164.9 514.3 L168.7 514.3 L172.4 514.4 L176.0 514.6 L179.3 514.8 L182.5 515.1 L185.4 515.3 L188.0 515.7 L190.2 516.0 L192.1 516.4 L193.7 516.8 L194.9 517.2 L195.6 517.6 L196.0 518.0 L196.0 518.4M139.6 513.5 L139.6 513.2 L139.9 512.9 L140.4 512.7 L141.2 512.4 L142.1 512.2 L143.3 511.9 L144.7 511.7 L146.3 511.5 L148.1 511.3 L150.0 511.2 L152.0 511.0 L154.2 510.9 L156.4 510.9 L158.7 510.8 L161.0 510.8 L163.3 510.8 L165.6 510.9 L167.8 510.9 L170.0 511.0 L172.0 511.2 L173.9 511.3 L175.7 511.5 L177.3 511.7 L178.7 511.9 L179.9 512.2 L180.8 512.4 L181.6 512.7 L182.1 512.9 L182.4 513.2 L182.4 513.5M153.8 511.0 L153.8 510.9 L153.9 510.8 L154.1 510.7 L154.4 510.6 L154.7 510.5 L155.1 510.4 L155.6 510.4 L156.1 510.3 L156.7 510.2 L157.4 510.2 L158.0 510.1 L158.7 510.1 L159.5 510.1 L160.2 510.1 L161.0 510.1 L161.8 510.1 L162.5 510.1 L163.3 510.1 L164.0 510.1 L164.6 510.2 L165.3 510.2 L165.9 510.3 L166.4 510.4 L166.9 510.4 L167.3 510.5 L167.6 510.6 L167.9 510.7 L168.1 510.8 L168.2 510.9 L168.2 511.0" stroke="#8fe0e0" stroke-opacity="0.5" stroke-width="1.200" fill="none"/></g>
<path d="M163.5 676.9 L165.1 676.8 L166.8 676.3 L168.5 675.3 L170.1 673.9 L171.8 672.1 L173.4 669.8 L174.9 667.1 L176.5 664.0 L177.9 660.4 L179.3 656.5 L180.6 652.1 L181.8 647.4 L183.0 642.4 L184.0 637.0 L184.9 631.3 L185.6 625.4 L186.3 619.3 L186.8 613.0 L187.1 606.6 L187.3 600.1 L187.4 593.5 L187.3 586.9 L187.1 580.4 L186.8 574.0 L186.3 567.7 L185.6 561.6 L184.9 555.7 L184.0 550.0 L183.0 544.6 L181.8 539.6 L180.6 534.9 L179.3 530.5 L177.9 526.6 L176.5 523.0 L174.9 519.9 L173.4 517.2 L171.8 514.9 L170.1 513.1 L168.5 511.7 L166.8 510.7 L165.1 510.2 L163.5 510.1" stroke="#bdbdbd" stroke-width="1.150" fill="none"/>
<path d="M161 533V653" stroke="#a8a8a8" stroke-width="1.4"/>
</svg>
<svg style="position:absolute;left:318px;top:267px" width="862" height="592" viewBox="318 267 862 592">
<defs><linearGradient id="th" x1="0" y1="0" x2="0" y2="1"><stop offset="0" stop-color="#ffffff"/><stop offset="1" stop-color="#eceae8"/></linearGradient></defs>
<rect x="1161.500" y="279.500" width="3" height="528" rx="1.500" fill="#3584e4" stroke="#1b6acb" stroke-width="1"/>
<path d="M1171 294.5H1178M1171 309.5H1178M1171 323.5H1178M1171 338.5H1178M1171 353.5H1178M1171 367.5H1178M1171 382.5H1178M1171 397.5H1178M1171 412.5H1178M1171 426.5H1178M1171 441.5H1178M1171 456.5H1178M1171 471.5H1178M1171 485.5H1178M1171 500.5H1178M1171 515.5H1178M1171 530.5H1178M1171 544.5H1178M1171 559.5H1178M1171 574.5H1178M1171 589.5H1178M1171 603.5H1178M1171 618.5H1178M1171 633.5H1178M1171 647.5H1178M1171 662.5H1178M1171 677.5H1178M1171 692.5H1178M1171 706.5H1178M1171 721.5H1178M1171 736.5H1178M1171 751.5H1178M1171 765.5H1178M1171 780.5H1178M1171 795.5H1178" stroke="#8a8d8e" stroke-width="1" fill="none"/>
<rect x="330.500" y="840.500" width="798" height="3" rx="1.500" fill="#3584e4" stroke="#1b6acb" stroke-width="1"/>
<path d="M342.5 850V857M353.5 850V857M364.5 850V857M375.5 850V857M386.5 850V857M397.5 850V857M408.5 850V857M419.5 850V857M430.5 850V857M442.5 850V857M453.5 850V857M464.5 850V857M475.5 850V857M486.5 850V857M497.5 850V857M508.5 850V857M519.5 850V857M530.5 850V857M541.5 850V857M553.5 850V857M564.5 850V857M575.5 850V857M586.5 850V857M597.5 850V857M608.5 850V857M619.5 850V857M630.5 850V857M641.5 850V857M652.5 850V857M664.5 850V857M675.5 850V857M686.5 850V857M697.5 850V857M708.5 850V857M719.5 850V857M730.5 850V857M741.5 850V857M752.5 850V857M763.5 850V857M775.5 850V857M786.5 850V857M797.5 850V857M808.5 850V857M819.5 850V857M830.5 850V857M841.5 850V857M852.5 850V857M863.5 850V857M874.5 850V857M886.5 850V857M897.5 850V857M908.5 850V857M919.5 850V857M930.5 850V857M941.5 850V857M952.5 850V857M963.5 850V857M974.5 850V857M985.5 850V857M997.5 850V857M1008.5 850V857M1019.5 850V857M1030.5 850V857M1041.5 850V857M1052.5 850V857M1063.5 850V857M1074.5 850V857M1085.5 850V857M1096.5 850V857M1108.5 850V857M1119.5 850V857" stroke="#8a8d8e" stroke-width="1" fill="none"/>
<path d="M1170.86 813.39 A9.3 9.3 0 1 1 1170.86 800.61 L1176.90 807.00Z" fill="url(#th)" stroke="#c4bfb9" stroke-width="1" stroke-linejoin="round"/>
<path d="M1121.35 848.40 A9.3 9.3 0 1 1 1134.65 848.40 L1128.00 855.20Z" fill="url(#th)" stroke="#c4bfb9" stroke-width="1" stroke-linejoin="round"/>
</svg>
<svg style="position:absolute;left:1156px;top:861px" width="24" height="23" viewBox="1156 861 24 23"><path d="M1158.400 881.500L1176.600 863.300M1163.600 881.500L1176.600 868.500M1168.500 881.500L1176.600 873.400M1173.400 881.500L1176.600 878.300" stroke="#aaa69f" stroke-width="1.400" stroke-linecap="round" fill="none"/></svg>
<svg style="position:absolute;left:20px;top:145px" width="105" height="35" viewBox="20 145 105 35">
<defs><linearGradient id="gd" x1="0" y1="0" x2="1" y2="1"><stop offset="0" stop-color="#ffffff"/><stop offset="1" stop-color="#d2d2d2"/></linearGradient><linearGradient id="gy" x1="0" y1="0" x2="1" y2="1"><stop offset="0" stop-color="#f9ebaa"/><stop offset="1" stop-color="#eec746"/></linearGradient><linearGradient id="gb" x1="0" y1="0" x2="1" y2="1"><stop offset="0" stop-color="#b5d0f8"/><stop offset="1" stop-color="#4f94f8"/></linearGradient><linearGradient id="gw" x1="0" y1="0" x2="0" y2="1"><stop offset="0" stop-color="#fdfdfd"/><stop offset="1" stop-color="#d6d6d6"/></linearGradient></defs>
<path d="M25.500 152.500H37.500L44.500 159.500V173.500H25.500Z" fill="url(#gd)" stroke="#7a7a7a" stroke-width="1"/>
<path d="M37.500 152.500V159.500H44.500" fill="#ececec" stroke="#7a7a7a" stroke-width="1"/>
<rect x="62.500" y="154.500" width="19" height="19" fill="url(#gy)" stroke="#7a7a7a" stroke-width="1"/>
<rect x="63" y="155" width="18" height="3" fill="#efca4e"/>
<path d="M62.500 158.500H74.500L81.500 165.500" fill="none" stroke="#7a7a7a" stroke-width="1"/>
<path d="M73.500 158.500V165.500H81.500" fill="#f6df88" stroke="#7a7a7a" stroke-width="1"/>
<path d="M99.500 153.500H119.500V173.500H102.500L99.500 170.500Z" fill="url(#gb)" stroke="#7a7a7a" stroke-width="1"/>
<rect x="102.500" y="153.500" width="14" height="10.500" fill="url(#gw)" stroke="#7a7a7a" stroke-width="1"/>
<rect x="103" y="154" width="13" height="3" fill="#e07a68"/>
<rect x="104" y="166.500" width="11" height="7" fill="#e4e4e4" stroke="#7a7a7a" stroke-width="1"/>
<rect x="106" y="168" width="2.600" height="3.600" fill="#666"/>
</svg>
<svg style="position:absolute;left:28px;top:80px" width="560" height="26" viewBox="28 80 560 26">
<defs><linearGradient id="ga" x1="0" y1="0" x2="1" y2="0"><stop offset="0" stop-color="#0a9c1c"/><stop offset="0.45" stop-color="#2aae3c"/><stop offset="1" stop-color="#8ed69a"/></linearGradient></defs>
<rect x="33" y="86" width="16" height="5" fill="#aef6f6"/>
<path d="M33 91.500C35 90 38 90.200 41 90.400L49 90.200V95L33 96.800Z" fill="url(#ga)"/>
<path d="M34 87.200L36.500 88.200H39.500" stroke="#2a5050" stroke-width="0.900" fill="none"/>
<path d="M40.500 89.400H49" stroke="#1e4a4a" stroke-width="1.100" fill="none"/>
<path d="M41.600 88.500L38.300 99.300L40.800 99.900L42.900 88.800Z" fill="#111"/>
<rect x="40.300" y="86.100" width="2.700" height="2.700" fill="#f2ee20" stroke="#555028" stroke-width="0.700"/>
<rect x="142" y="86.300" width="16" height="13.300" fill="#82b4ff"/>
<path d="M142 95.100C146 95.600 150 94.600 154 94.200C156 94.100 157 94.300 158 94.600V99.600H142Z" fill="#185418"/>
<text x="142.700" y="93" font-family="Liberation Sans, sans-serif" font-size="8.200" letter-spacing="-0.600" fill="#dfeaff" stroke="#dfeaff" stroke-width="0.250">GL</text>
<rect x="244.500" y="85.500" width="15" height="15" fill="#ebeae8" stroke="#d2d0cc" stroke-width="1"/>
<rect x="245.3" y="86.300" width="4.500" height="1.700" fill="#6a9be8"/><rect x="245.3" y="87.800" width="4.500" height="1.400" fill="#2e8a2e"/>
<rect x="245.3" y="96.800" width="4.500" height="2.800" rx="1" fill="#2a9a10"/>
<rect x="254.1" y="86.300" width="4.500" height="1.700" fill="#6a9be8"/><rect x="254.1" y="87.800" width="4.500" height="1.400" fill="#2e8a2e"/>
<rect x="254.1" y="96.800" width="4.500" height="2.800" rx="1" fill="#2a9a10"/>
<path d="M250.400 87.300H253.300M250.400 98.300H253.300" stroke="#f08c22" stroke-width="1.500"/>
<path d="M247.300 90.200V95.800M256.700 90.200V95.800" stroke="#f09a44" stroke-width="1.300"/>
<path d="M249.300 90.200L254.700 95.700M254.700 90.200L249.300 95.700" stroke="#f08c22" stroke-width="1.400"/>
<rect x="438.100" y="88.400" width="12.900" height="11.600" fill="#a9c5f2"/>
<rect x="438.100" y="94.800" width="12.900" height="5.200" fill="#7a9c7a"/>
<rect x="435" y="85.700" width="12.900" height="11.300" fill="#82b4ff"/>
<path d="M435 92.300C438 92.900 441 92 444 91.400C446 91.100 447 91.300 447.900 91.700V97H435Z" fill="#125012"/>
<path d="M445 94.400L448.400 95.300L447.500 96.200L449.800 98.300L448.700 99.300L446.500 97.100L445.700 98Z" fill="#fff"/>
<rect x="557" y="85.900" width="15.800" height="14.100" fill="#5a82bc"/>
<path d="M557 92.800C561 93.300 566 92.200 572.800 92V100H557Z" fill="#0a3a0a"/>
<rect x="559.800" y="88.800" width="10.400" height="8.400" fill="#82b4ff"/>
<path d="M559.800 93.200C563 93.400 567 92.600 570.200 92.400V97.200H559.800Z" fill="#125012"/>
<rect x="559.800" y="88.800" width="10.400" height="8.400" fill="none" stroke="#ffffff" stroke-opacity="0.620" stroke-width="1.500"/>
</svg>
<div id="tx"><span class="t" style="left:516.50px;top:19.98px;font-size:14.67px;font-weight:700;letter-spacing:-0.268px;color:#2e3436">Fast Panorama preview</span>
<span class="t" style="left:18.30px;top:52.08px;font-size:14.67px;font-weight:400;letter-spacing:-0.106px;color:#2e3436">File</span>
<span class="t" style="left:58.40px;top:52.08px;font-size:14.67px;font-weight:400;letter-spacing:0.034px;color:#2e3436">Edit</span>
<span class="t" style="left:100.20px;top:52.08px;font-size:14.67px;font-weight:400;letter-spacing:0.171px;color:#2e3436">View</span>
<span class="t" style="left:148.00px;top:52.08px;font-size:14.67px;font-weight:400;letter-spacing:0.108px;color:#2e3436">Interface</span>
<span class="t" style="left:223.60px;top:52.08px;font-size:14.67px;font-weight:400;letter-spacing:0.011px;color:#2e3436">Help</span>
<span class="t" style="left:50.30px;top:86.08px;font-size:14.67px;font-weight:400;letter-spacing:0.026px;color:#2e3436">Assistant</span>
<span class="t" style="left:159.40px;top:86.08px;font-size:14.67px;font-weight:400;letter-spacing:0.108px;color:#2e3436">Preview</span>
<span class="t" style="left:261.40px;top:86.08px;font-size:14.67px;font-weight:400;letter-spacing:-0.319px;color:#2e3436">Layout</span>
<span class="t" style="left:336.30px;top:86.08px;font-size:14.67px;font-weight:400;letter-spacing:0.121px;color:#2e3436">Projection</span>
<span class="t" style="left:452.40px;top:86.08px;font-size:14.67px;font-weight:400;letter-spacing:0.101px;color:#2e3436">Move/Drag</span>
<span class="t" style="left:574.40px;top:86.08px;font-size:14.67px;font-weight:400;letter-spacing:-0.370px;color:#2e3436">Crop</span>
<span class="t" style="left:48.00px;top:126.18px;font-size:14.67px;font-weight:400;letter-spacing:0.268px;color:#2e3436">Project</span>
<span class="t" style="left:207.60px;top:146.48px;font-size:14.67px;font-weight:400;letter-spacing:-0.332px;color:#2e3436">1. Load images...</span>
<span class="t" style="left:429.20px;top:146.48px;font-size:14.67px;font-weight:400;letter-spacing:-0.072px;color:#2e3436">2. Align...</span>
<span class="t" style="left:603.30px;top:146.48px;font-size:14.67px;font-weight:400;letter-spacing:-0.118px;color:#2e3436">3. Create panorama...</span>
<span class="t" style="left:858.00px;top:137.18px;font-size:14.67px;font-weight:400;letter-spacing:-0.173px;color:#2e3436">104 images are connected by 3712 control points.</span>
<span class="t" style="left:847.50px;top:156.18px;font-size:14.67px;font-weight:400;letter-spacing:0.077px;color:#2e3436">Mean error after optimization: 0,2 pixel, max: 54,9</span>
<span class="t" style="left:10.30px;top:201.08px;font-size:14.67px;font-weight:400;letter-spacing:-0.066px;color:#2e3436">displayed images</span>
<span class="t" style="left:53.00px;top:232.48px;font-size:14.67px;font-weight:400;letter-spacing:0.234px;color:#2e3436">All</span>
<span class="t" style="left:125.50px;top:232.48px;font-size:14.67px;font-weight:400;letter-spacing:-0.387px;color:#2e3436">None</span>
<span class="t" style="left:186.40px;top:232.48px;font-size:14.67px;font-weight:400;letter-spacing:0.044px;color:#2e3436">0</span>
<span class="t" style="left:236.40px;top:232.48px;font-size:14.67px;font-weight:400;letter-spacing:0.044px;color:#2e3436">1</span>
<span class="t" style="left:286.40px;top:232.48px;font-size:14.67px;font-weight:400;letter-spacing:0.044px;color:#2e3436">2</span>
<span class="t" style="left:336.40px;top:232.48px;font-size:14.67px;font-weight:400;letter-spacing:0.044px;color:#2e3436">3</span>
<span class="t" style="left:386.40px;top:232.48px;font-size:14.67px;font-weight:400;letter-spacing:0.044px;color:#2e3436">4</span>
<span class="t" style="left:436.40px;top:232.48px;font-size:14.67px;font-weight:400;letter-spacing:0.044px;color:#2e3436">5</span>
<span class="t" style="left:486.40px;top:232.48px;font-size:14.67px;font-weight:400;letter-spacing:0.044px;color:#2e3436">6</span>
<span class="t" style="left:536.40px;top:232.48px;font-size:14.67px;font-weight:400;letter-spacing:0.044px;color:#2e3436">7</span>
<span class="t" style="left:586.40px;top:232.48px;font-size:14.67px;font-weight:400;letter-spacing:0.044px;color:#2e3436">8</span>
<span class="t" style="left:636.40px;top:232.48px;font-size:14.67px;font-weight:400;letter-spacing:0.044px;color:#2e3436">9</span>
<span class="t" style="left:685.75px;top:232.48px;font-size:14.67px;font-weight:400;letter-spacing:-0.406px;color:#2e3436">10</span>
<span class="t" style="left:738.75px;top:232.48px;font-size:14.67px;font-weight:400;letter-spacing:0.141px;color:#2e3436">11</span>
<span class="t" style="left:791.75px;top:232.48px;font-size:14.67px;font-weight:400;letter-spacing:-0.406px;color:#2e3436">12</span>
<span class="t" style="left:845.75px;top:232.48px;font-size:14.67px;font-weight:400;letter-spacing:-0.406px;color:#2e3436">13</span>
<span class="t" style="left:900.75px;top:232.48px;font-size:14.67px;font-weight:400;letter-spacing:-0.406px;color:#2e3436">14</span>
<span class="t" style="left:954.75px;top:232.48px;font-size:14.67px;font-weight:400;letter-spacing:-0.406px;color:#2e3436">15</span>
<span class="t" style="left:1008.75px;top:232.48px;font-size:14.67px;font-weight:400;letter-spacing:-0.406px;color:#2e3436">16</span>
<span class="t" style="left:1063.75px;top:232.48px;font-size:14.67px;font-weight:400;letter-spacing:-0.406px;color:#2e3436">17</span>
<span class="t" style="left:1117.75px;top:232.48px;font-size:14.67px;font-weight:400;letter-spacing:-0.406px;color:#2e3436">18</span>
<div style="position:absolute;left:1170px;top:222px;width:11px;height:34px;overflow:hidden"><span class="t" style="left:3.20px;top:10.48px;font-size:14.67px;font-weight:400;letter-spacing:-0.406px;color:#2e3436">19</span></div>
<span class="t" style="left:14.40px;top:268.77px;font-size:10.67px;font-weight:400;letter-spacing:0.047px;color:#2e3436">Overview</span>
<span class="t" style="left:16.40px;top:299.28px;font-size:14.67px;font-weight:400;letter-spacing:-0.167px;color:#2e3436">Mode:</span>
<span class="t" style="left:80.40px;top:299.28px;font-size:14.67px;font-weight:400;letter-spacing:-0.177px;color:#2e3436">Panosphere (outside)</span>
<span class="t" style="left:1014.40px;top:866.38px;font-size:14.67px;font-weight:400;letter-spacing:-0.048px;color:#2e3436">360,0 x 180,0</span></div>
</div>
</body></html>
